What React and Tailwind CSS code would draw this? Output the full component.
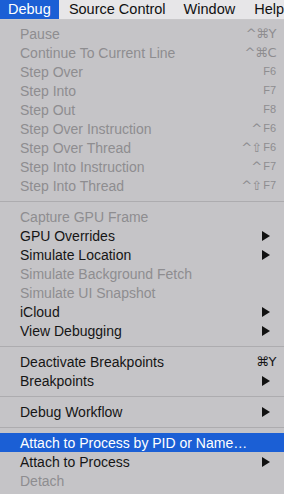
import React from 'react';

const items = [
    { label: 'Pause', key: '^⌘Y', off: true },
    { label: 'Continue To Current Line', key: '^⌘C', off: true },
    { label: 'Step Over', fkey: 'F6', off: true },
    { label: 'Step Into', fkey: 'F7', off: true },
    { label: 'Step Out', fkey: 'F8', off: true },
    { label: 'Step Over Instruction', mod: '^', fkey: 'F6', off: true },
    { label: 'Step Over Thread', mod: '^⇧', fkey: 'F6', off: true },
    { label: 'Step Into Instruction', mod: '^', fkey: 'F7', off: true },
    { label: 'Step Into Thread', mod: '^⇧', fkey: 'F7', off: true },
    'sep',
    { label: 'Capture GPU Frame', off: true },
    { label: 'GPU Overrides', sub: true },
    { label: 'Simulate Location', sub: true },
    { label: 'Simulate Background Fetch', off: true },
    { label: 'Simulate UI Snapshot', off: true },
    { label: 'iCloud', sub: true },
    { label: 'View Debugging', sub: true },
    'sep',
    { label: 'Deactivate Breakpoints', key: '⌘Y' },
    { label: 'Breakpoints', sub: true },
    'sep',
    { label: 'Debug Workflow', sub: true },
    'sep',
    { label: 'Attach to Process by PID or Name…', active: true },
    { label: 'Attach to Process', sub: true },
    { label: 'Detach', off: true },
];

const Arrow = () => (
    <svg width="8" height="10" viewBox="0 0 8 10" className="mr-[6px]">
        <path d="M0 0 L8 5 L0 10 Z" fill="#111" />
    </svg>
);

const MenuRow = ({ item }) => {
    const color = item.active ? 'text-white' : item.off ? 'text-[#8e8d90]' : 'text-[#151515]';
    return (
        <div className={`flex items-center h-[19px] pl-5 pr-2 ${item.active ? 'bg-[#1b5fd5]' : ''} ${color}`}>
            <span className="flex-1 text-[14px] leading-none whitespace-nowrap">{item.label}</span>
            {item.sub && <Arrow />}
            {item.key && (
                <span className="text-[13px] leading-none font-['DejaVu_Sans',sans-serif] tracking-[-0.5px]">{item.key}</span>
            )}
            {item.fkey && (
                <span className="flex items-center leading-none">
                    {item.mod && (
                        <span className="text-[13px] font-['DejaVu_Sans',sans-serif] tracking-[-1px] mr-[2px]">{item.mod}</span>
                    )}
                    <span className="text-[11px]">{item.fkey}</span>
                </span>
            )}
        </div>
    );
};

const App = () => {
    return (
        <div className="w-[284px] h-[494px] overflow-hidden bg-[#c5c4c7] font-['Liberation_Sans',Arial,sans-serif]">
            {/* menu bar */}
            <div className="flex items-center h-5 bg-[#e7e6e8] border-b border-[#c9c8ca] text-[14.5px] text-[#111] whitespace-nowrap">
                <div className="h-full flex items-center px-2 w-[60px] bg-[#1b5fd5] text-white">Debug</div>
                <div className="ml-[10px]">Source Control</div>
                <div className="ml-[18px]">Window</div>
                <div className="ml-[19px]">Help</div>
            </div>

            {/* dropdown */}
            <div className="pt-1">
                {items.map((item, i) =>
                    item === 'sep' ? (
                        <div key={i} className="h-3 flex items-center">
                            <div className="w-full h-px bg-[#adacaf]" />
                        </div>
                    ) : (
                        <MenuRow key={i} item={item} />
                    )
                )}
            </div>
        </div>
    );
};

export default App;
